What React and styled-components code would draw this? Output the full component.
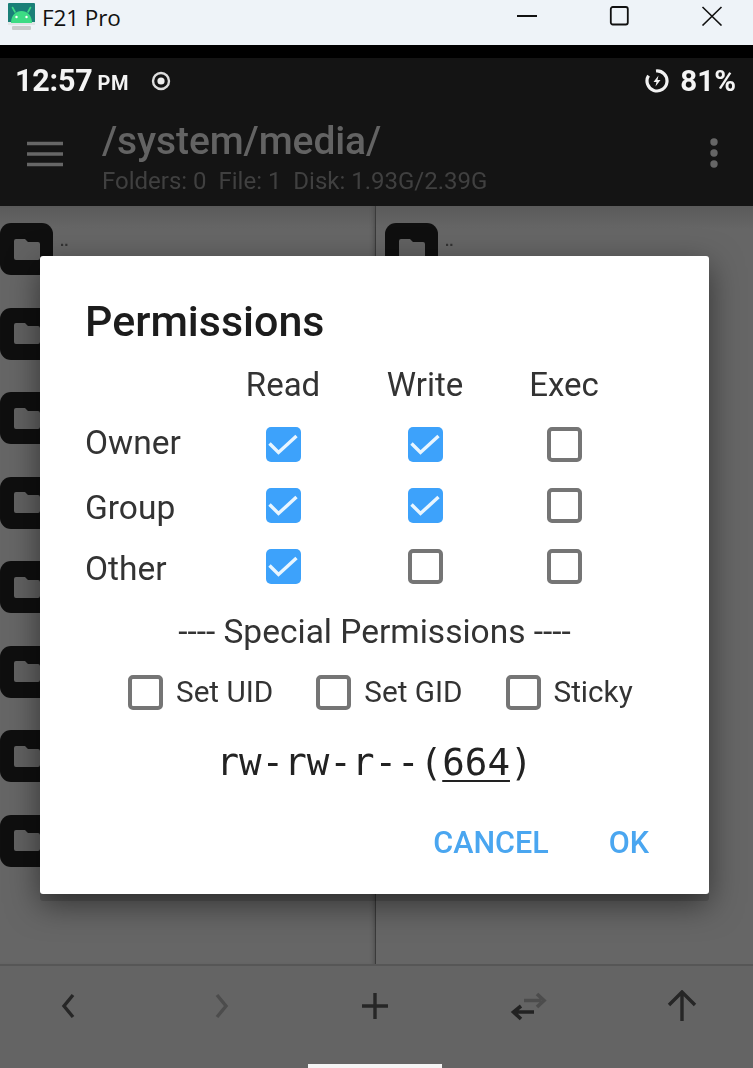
import React from 'react';
import styled, { createGlobalStyle } from 'styled-components';

const Global = createGlobalStyle`
  html, body { margin: 0; padding: 0; background: #666; }
  * { box-sizing: border-box; }
  body { font-family: Roboto, "Liberation Sans", sans-serif; }
`;

const Window = styled.div`
  width: 753px;
  height: 1068px;
  position: relative;
  overflow: hidden;
  display: flex;
  flex-direction: column;
`;

const TitleBar = styled.div`
  height: 45px;
  flex: none;
  background: #eef3f8;
  display: flex;
  align-items: flex-start;
  padding: 3px 30px 0 7px;
`;

const AppName = styled.span`
  font-family: "Open Sans", "Noto Sans", sans-serif;
  font-size: 22.5px;
  line-height: 30px;
  color: #111;
  margin-left: 6px;
  letter-spacing: -0.1px;
`;

const WinButtons = styled.div`
  margin-left: auto;
  display: flex;
  gap: 72px;
  align-items: center;
  padding-top: 3px;
`;

const Screen = styled.div`
  flex: 1;
  display: flex;
  flex-direction: column;
  filter: blur(0.6px);
  min-height: 0;
`;

const BlackStrip = styled.div`
  height: 13px;
  flex: none;
  background: #000;
`;

const Header = styled.div`
  height: 148px;
  flex: none;
  background: #141414;
  display: flex;
  flex-direction: column;
`;

const StatusBar = styled.div`
  height: 46px;
  display: flex;
  align-items: center;
  padding: 0 17px 0 15px;
  color: #f4f4f4;
  font-weight: 700;
`;

const Clock = styled.span`
  font-size: 30.5px;
  line-height: 44px;
  letter-spacing: -0.2px;
`;

const Meridiem = styled.span`
  font-size: 20px;
  line-height: 44px;
  margin: 4px 0 0 5px;
  letter-spacing: 0.4px;
`;

const RecordIcon = styled.svg`
  margin-left: 22px;
  flex: none;
`;

const Battery = styled.span`
  margin-left: auto;
  display: flex;
  align-items: center;
  gap: 11px;
  font-size: 29.5px;
  line-height: 44px;
`;

const AppBar = styled.div`
  flex: 1;
  display: flex;
  align-items: flex-start;
  padding: 0 34px 0 27px;
`;

const PathBlock = styled.div`
  margin-left: 39px;
  display: flex;
  flex-direction: column;
`;

const PathText = styled.div`
  font-size: 39px;
  font-weight: 500;
  line-height: 48px;
  margin-top: 13px;
  color: #636363;
  letter-spacing: -0.1px;
`;

const PathInfo = styled.div`
  font-size: 24px;
  line-height: 28px;
  margin-top: 2px;
  color: #404040;
  white-space: pre;
`;

const MenuIcon = styled.svg`
  margin-top: 37px;
  flex: none;
`;

const DotsIcon = styled.svg`
  margin: 33px 0 0 auto;
  flex: none;
`;

const Panes = styled.div`
  flex: 1;
  min-height: 0;
  display: flex;
`;

const Pane = styled.div`
  flex: ${({ $side }) => ($side === 'left' ? '0 0 375px' : '1')};
  background: linear-gradient(#5a5a5a, #666 3%);
  border-left: ${({ $side }) => ($side === 'right' ? '1px solid #3a3a3a' : 'none')};
  box-shadow: ${({ $side }) => ($side === 'left' ? 'inset -4px 0 4px -3px #4c4c4c' : 'none')};
  display: flex;
  flex-direction: column;
  gap: 32.5px;
  padding: 17px 0 0 ${({ $side }) => ($side === 'left' ? '0' : '9px')};
  overflow: hidden;
`;

const FileRow = styled.div`
  display: flex;
  align-items: flex-start;
  height: 52px;
  flex: none;
`;

const FolderTile = styled.div`
  width: 53px;
  height: 52px;
  border-radius: 11px;
  background: #0f0f0f;
  display: flex;
  align-items: center;
  justify-content: center;
  flex: none;
`;

const UpLabel = styled.span`
  font-family: "Liberation Sans", sans-serif;
  font-size: 15px;
  font-weight: 700;
  line-height: 16px;
  color: #333;
  margin: 10px 0 0 7px;
`;

const BottomBar = styled.div`
  height: 104px;
  flex: none;
  background: #646464;
  border-top: 2px solid #565656;
  display: flex;
  align-items: flex-start;
  justify-content: space-between;
  padding: 24px 49px 0 46px;
  position: relative;
`;

const NavSlot = styled.div`
  width: 44px;
  height: 32px;
  display: flex;
  align-items: center;
  justify-content: center;
`;

const HomeIndicator = styled.div`
  position: absolute;
  left: 308px;
  bottom: 0;
  width: 134px;
  height: 4px;
  background: #f4f4f4;
`;

const Dialog = styled.div`
  position: absolute;
  left: 40px;
  top: 256px;
  width: 669px;
  height: 638px;
  background: #fff;
  border-radius: 3px;
  box-shadow: 0 7px 0 rgba(0, 0, 0, 0.14), 0 10px 32px rgba(0, 0, 0, 0.5);
  padding: 0 0 0 45px;
  filter: blur(0.5px);
  display: flex;
  flex-direction: column;
`;

const DialogTitle = styled.h2`
  margin: 37px 0 0;
  font-size: 43px;
  font-weight: 500;
  line-height: 56px;
  color: #1c1c1c;
`;

const PermGrid = styled.div`
  margin-top: 14px;
  display: grid;
  grid-template-columns: 128px 140px 144px 134px;
  grid-template-rows: 51px 61px 61px 61px;
  align-items: center;
`;

const ColHead = styled.div`
  font-size: 33px;
  color: #333;
  text-align: center;
  line-height: 40px;
  padding-bottom: 8px;
`;

const RowHead = styled.div`
  font-size: 33.5px;
  color: #333;
  line-height: 40px;
  margin-top: ${({ $nudge }) => $nudge}px;
`;

const Cell = styled.div`
  display: flex;
  justify-content: center;
`;

const Box = styled.span`
  width: 35px;
  height: 35px;
  flex: none;
  border-radius: 5px;
  display: flex;
  align-items: center;
  justify-content: center;
  background: ${({ $on }) => ($on ? '#3da2fb' : '#fff')};
  border: ${({ $on }) => ($on ? 'none' : '4px solid #757575')};
`;

const SpecialHead = styled.div`
  margin: 15px 45px 0 0;
  font-size: 33.5px;
  line-height: 40px;
  color: #333;
  text-align: center;
`;

const SpecialRow = styled.div`
  margin: 20px 0 0 43px;
  display: flex;
  gap: 43px;
`;

const SpecialItem = styled.label`
  display: flex;
  align-items: center;
  gap: 13px;
  font-size: 29.7px;
  line-height: 40px;
  color: #333;
`;

const ModeText = styled.div`
  margin: 26px 45px 0 0;
  text-align: center;
  font-family: "DejaVu Sans Mono", "Liberation Mono", monospace;
  font-size: 37.5px;
  line-height: 48px;
  color: #222;
  u { text-underline-offset: 5px; text-decoration-thickness: 2px; }
`;

const Actions = styled.div`
  margin: 37px 60px 0 0;
  display: flex;
  justify-content: flex-end;
  gap: 60px;
`;

const ActionButton = styled.button`
  border: 0;
  padding: 0;
  background: none;
  font-family: Roboto, sans-serif;
  font-size: 30.5px;
  font-weight: 500;
  line-height: 40px;
  color: #4aa6f0;
`;

const Logo = () => (
  <svg width="29" height="27" viewBox="0 0 29 27">
    <rect x="1" y="0" width="27" height="21" rx="1" fill="#1a7f78" />
    <rect x="1" y="19" width="27" height="3" fill="#e0e4e6" />
    <rect x="5" y="23" width="19" height="4" rx="1" fill="#c9cccc" />
    <path d="M4 20 C4 12 9 8 14.5 8 S25 12 25 20 Z" fill="#3ddc84" />
    <path d="M8 9 L5.5 4.5 M21 9 L23.5 4.5" stroke="#3ddc84" strokeWidth="1.6" strokeLinecap="round" />
    <circle cx="9.5" cy="14" r="1.2" fill="#fff" />
    <circle cx="19.5" cy="14" r="1.2" fill="#fff" />
  </svg>
);

const Minimize = () => (
  <svg width="20" height="20" viewBox="0 0 20 20">
    <rect x="0" y="9" width="20" height="2" fill="#111" />
  </svg>
);

const Maximize = () => (
  <svg width="20" height="20" viewBox="0 0 20 20">
    <rect x="1.8" y="1" width="17" height="17.5" rx="2" fill="none" stroke="#111" strokeWidth="1.8" />
  </svg>
);

const Close = () => (
  <svg width="22" height="20" viewBox="0 0 22 20">
    <path d="M1.5 1 L20.5 19.5 M20.5 1 L1.5 19.5" stroke="#111" strokeWidth="1.6" />
  </svg>
);

const FolderGlyph = () => (
  <svg width="26" height="21" viewBox="0 0 26 21">
    <path d="M2 0 H11 L14 3 H24 Q26 3 26 5 V19 Q26 21 24 21 H2 Q0 21 0 19 V2 Q0 0 2 0 Z" fill="#626262" />
  </svg>
);

const Check = () => (
  <svg width="31" height="24" viewBox="0 0 31 24">
    <path d="M1.5 10.5 L10.5 19.5 L28.5 3" fill="none" stroke="#e9f6ff" strokeWidth="3.4" />
  </svg>
);

const STATUS_ROWS = [
  { name: 'Owner', nudge: -4, flags: [true, true, false] },
  { name: 'Group', nudge: 4, flags: [true, true, false] },
  { name: 'Other', nudge: 4, flags: [true, false, false] },
];

const FILE_ROWS = [0, 1, 2, 3, 4, 5, 6, 7];

const FilePane = ({ side }) => (
  <Pane $side={side}>
    {FILE_ROWS.map((i) => (
      <FileRow key={i}>
        <FolderTile>
          <FolderGlyph />
        </FolderTile>
        {i === 0 && <UpLabel>..</UpLabel>}
      </FileRow>
    ))}
  </Pane>
);

const CheckBox = ({ on }) => <Box $on={on}>{on && <Check />}</Box>;

export default function App() {
  return (
    <Window>
      <Global />
      <TitleBar>
        <Logo />
        <AppName>F21 Pro</AppName>
        <WinButtons>
          <Minimize />
          <Maximize />
          <Close />
        </WinButtons>
      </TitleBar>
      <Screen>
        <BlackStrip />
        <Header>
          <StatusBar>
            <Clock>12:57</Clock>
            <Meridiem>PM</Meridiem>
            <RecordIcon width="20" height="20" viewBox="0 0 20 20">
              <circle cx="10" cy="10" r="8" fill="none" stroke="#ddd" strokeWidth="2.4" />
              <circle cx="10" cy="10" r="3.6" fill="#eee" />
            </RecordIcon>
            <Battery>
              <svg width="24" height="24" viewBox="0 0 24 24">
                <path d="M11 2 A10 10 0 1 1 3.5 6.7" fill="none" stroke="#f2f2f2" strokeWidth="3.2" />
                <path d="M13.5 6.5 L8.5 13 H11.5 L10.5 17.5 L15.5 11 H12.5 Z" fill="#f2f2f2" />
              </svg>
              81%
            </Battery>
          </StatusBar>
          <AppBar>
            <MenuIcon width="36" height="26" viewBox="0 0 36 26">
              <path d="M0 2.5 H36 M0 13 H36 M0 23.5 H36" stroke="#666" strokeWidth="3.6" />
            </MenuIcon>
            <PathBlock>
              <PathText>/system/media/</PathText>
              <PathInfo>Folders: 0  File: 1  Disk: 1.93G/2.39G</PathInfo>
            </PathBlock>
            <DotsIcon width="10" height="32" viewBox="0 0 10 32">
              <circle cx="5" cy="5" r="3.7" fill="#666" />
              <circle cx="5" cy="16" r="3.7" fill="#666" />
              <circle cx="5" cy="27" r="3.7" fill="#666" />
            </DotsIcon>
          </AppBar>
        </Header>
        <Panes>
          <FilePane side="left" />
          <FilePane side="right" />
        </Panes>
        <BottomBar>
          <NavSlot>
            <svg width="16" height="26" viewBox="0 0 16 26">
              <path d="M13 2 L4 13 L13 24" fill="none" stroke="#262626" strokeWidth="3.4" />
            </svg>
          </NavSlot>
          <NavSlot>
            <svg width="16" height="26" viewBox="0 0 16 26">
              <path d="M3 2 L12 13 L3 24" fill="none" stroke="#4c4c4c" strokeWidth="3.4" />
            </svg>
          </NavSlot>
          <NavSlot>
            <svg width="28" height="28" viewBox="0 0 28 28">
              <path d="M14 1 V27 M1 14 H27" stroke="#262626" strokeWidth="3.4" />
            </svg>
          </NavSlot>
          <NavSlot>
            <svg width="38" height="30" viewBox="0 0 38 30">
              <path d="M14 9.5 H31 M27 3 L34 9.5 L27 16" fill="none" stroke="#4c4c4c" strokeWidth="3.6" />
              <path d="M24 21 H6 M11 15 L3.5 21 L11 28" fill="none" stroke="#222" strokeWidth="3.6" />
            </svg>
          </NavSlot>
          <NavSlot>
            <svg width="30" height="32" viewBox="0 0 30 32">
              <path d="M15 31 V2 M2 15 L15 2 L28 15" fill="none" stroke="#262626" strokeWidth="3.4" />
            </svg>
          </NavSlot>
          <HomeIndicator />
        </BottomBar>
      </Screen>
      <Dialog>
        <DialogTitle>Permissions</DialogTitle>
        <PermGrid>
          <span />
          <ColHead>Read</ColHead>
          <ColHead>Write</ColHead>
          <ColHead>Exec</ColHead>
          {STATUS_ROWS.map((row) => (
            <React.Fragment key={row.name}>
              <RowHead $nudge={row.nudge}>{row.name}</RowHead>
              {row.flags.map((on, i) => (
                <Cell key={i}>
                  <CheckBox on={on} />
                </Cell>
              ))}
            </React.Fragment>
          ))}
        </PermGrid>
        <SpecialHead>---- Special Permissions ----</SpecialHead>
        <SpecialRow>
          <SpecialItem>
            <CheckBox />
            Set UID
          </SpecialItem>
          <SpecialItem>
            <CheckBox />
            Set GID
          </SpecialItem>
          <SpecialItem>
            <CheckBox />
            Sticky
          </SpecialItem>
        </SpecialRow>
        <ModeText>
          rw-rw-r--(<u>664</u>)
        </ModeText>
        <Actions>
          <ActionButton>CANCEL</ActionButton>
          <ActionButton>OK</ActionButton>
        </Actions>
      </Dialog>
    </Window>
  );
}
